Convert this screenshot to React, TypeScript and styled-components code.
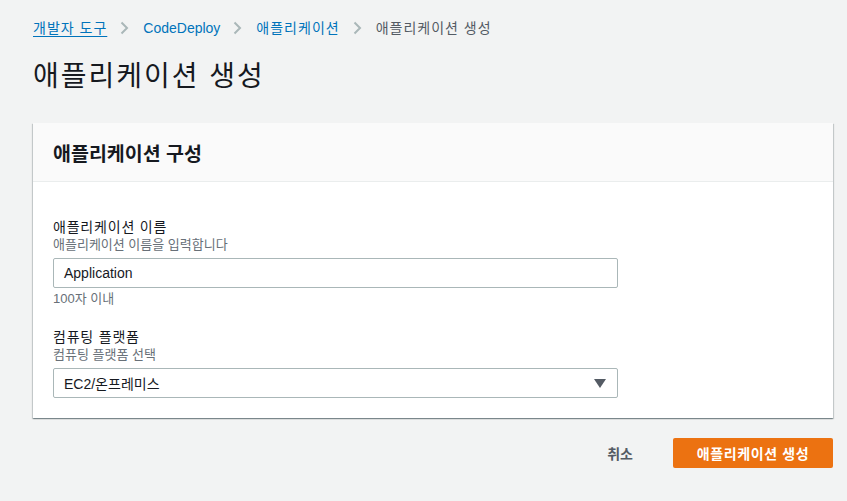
import styled, { createGlobalStyle } from 'styled-components';

const GlobalStyle = createGlobalStyle`
    html, body {
        margin: 0;
        background: #f2f3f3;
    }
    body {
        font-family: "Liberation Sans", "Noto Sans CJK KR", sans-serif;
        color: #16191f;
    }
`

const Page = styled.div`
    padding: 18px 14px 0 33px;
    display: flex;
    flex-direction: column;
`

const Crumbs = styled.nav`
    display: flex;
    align-items: center;
    height: 20px;
    font-size: 14px;
`

const Crumb = styled.a<{ current?: boolean; underline?: boolean; latin?: boolean }>`
    color: ${(props) => (props.current ? '#545b64' : '#0073bb')};
    text-decoration: ${(props) => (props.underline ? 'underline' : 'none')};
    text-underline-offset: 3px;
    letter-spacing: ${(props) => (props.latin ? '0' : '1px')};
    line-height: 20px;
`

const Sep = styled.span`
    display: flex;
    margin: 0 14px 0 13px;
`

const Title = styled.h1`
    margin: 21px 0 0;
    font-size: 28px;
    font-weight: 400;
    letter-spacing: 2px;
    line-height: 36px;
    height: 36px;
`

const Card = styled.section`
    margin-top: 28px;
    background: #fff;
    box-shadow: 0 1px 1px 0 rgba(0, 28, 36, 0.3), 1px 1px 1px 0 rgba(0, 28, 36, 0.15),
        -1px 1px 1px 0 rgba(0, 28, 36, 0.15);
`

const CardHeader = styled.header`
    height: 58px;
    display: flex;
    align-items: center;
    padding: 0 20px;
    background: #fafafa;
    border-bottom: 1px solid #eaeded;
    h2 {
        margin: 0;
        font-size: 19.5px;
        font-weight: 700;
    }
`

const CardBody = styled.div`
    padding: 35px 20px 20px;
    display: flex;
    flex-direction: column;
    gap: 20px;
`

const Field = styled.div`
    display: flex;
    flex-direction: column;
`

const Label = styled.label`
    font-size: 14px;
    letter-spacing: 0.8px;
    line-height: 20px;
`

const Hint = styled.span<{ gap?: number }>`
    font-size: 13px;
    line-height: 16px;
    color: #687078;
    margin-bottom: ${(props) => props.gap ?? 0}px;
`

const Constraint = styled(Hint)`
    margin-top: 3px;
`

const Control = styled.div`
    position: relative;
    width: 565px;
    height: 30px;
    box-sizing: border-box;
    border: 1px solid #aab7b8;
    border-radius: 2px;
    display: flex;
    align-items: center;
    padding: 0 10px;
    font-size: 14px;
`

const Caret = styled.span`
    position: absolute;
    right: 11px;
    top: 10px;
    width: 0;
    height: 0;
    border-left: 6px solid transparent;
    border-right: 6px solid transparent;
    border-top: 9px solid #545b64;
`

const Actions = styled.div`
    margin-top: 20px;
    display: flex;
    justify-content: flex-end;
    align-items: center;
    gap: 20px;
`

const Button = styled.button<{ primary?: boolean }>`
    height: 30px;
    padding: 0 20px;
    border: none;
    border-radius: 2px;
    font-family: inherit;
    font-size: 14px;
    font-weight: 700;
    letter-spacing: ${(props) => (props.primary ? '0.6px' : '0')};
    background: ${(props) => (props.primary ? '#ec7211' : 'transparent')};
    color: ${(props) => (props.primary ? '#fff' : '#545b64')};
    min-width: ${(props) => (props.primary ? '160px' : 'auto')};
`

function Chevron() {
    return (
        <svg width="9" height="14" viewBox="0 0 9 14">
            <path d="M1.5 1.5 L7 7 L1.5 12.5" fill="none" stroke="#aab7b8" strokeWidth="2" />
        </svg>
    )
}

function App() {
    return (
        <>
            <GlobalStyle />
            <Page>
                <Crumbs>
                    <Crumb underline>개발자 도구</Crumb>
                    <Sep><Chevron /></Sep>
                    <Crumb latin>CodeDeploy</Crumb>
                    <Sep><Chevron /></Sep>
                    <Crumb>애플리케이션</Crumb>
                    <Sep><Chevron /></Sep>
                    <Crumb current>애플리케이션 생성</Crumb>
                </Crumbs>
                <Title>애플리케이션 생성</Title>
                <Card>
                    <CardHeader><h2>애플리케이션 구성</h2></CardHeader>
                    <CardBody>
                        <Field>
                            <Label>애플리케이션 이름</Label>
                            <Hint gap={5}>애플리케이션 이름을 입력합니다</Hint>
                            <Control>Application</Control>
                            <Constraint>100자 이내</Constraint>
                        </Field>
                        <Field>
                            <Label>컴퓨팅 플랫폼</Label>
                            <Hint gap={5}>컴퓨팅 플랫폼 선택</Hint>
                            <Control>EC2/온프레미스<Caret /></Control>
                        </Field>
                    </CardBody>
                </Card>
                <Actions>
                    <Button>취소</Button>
                    <Button primary>애플리케이션 생성</Button>
                </Actions>
            </Page>
        </>
    )
}

export default App;
